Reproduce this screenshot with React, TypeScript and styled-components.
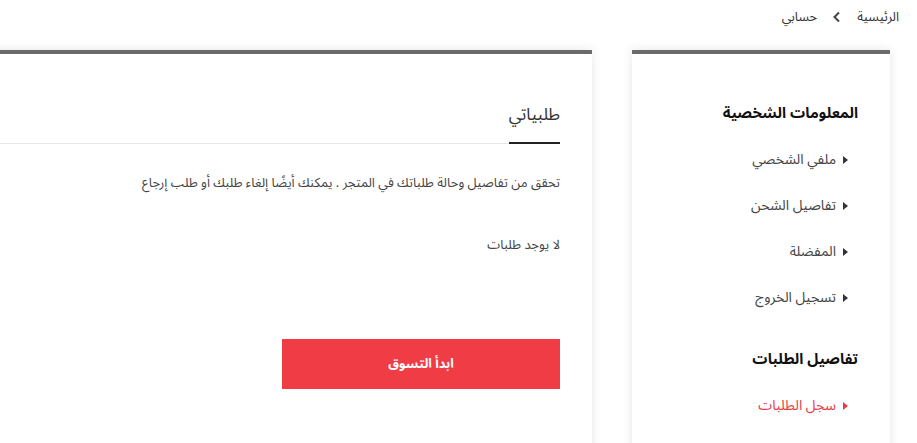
import styled, { createGlobalStyle } from "styled-components";

const GlobalStyle = createGlobalStyle`
  html, body {
    margin: 0;
    padding: 0;
    background: #fff;
    overflow: hidden;
  }
  body {
    font-family: "Noto Sans Arabic", "DejaVu Sans", "Noto Sans", sans-serif;
    direction: rtl;
  }
`;

const Page = styled.div`
  direction: rtl;
  width: 917px;
  height: 443px;
  overflow: hidden;
`;

const Breadcrumb = styled.nav`
  display: flex;
  align-items: center;
  gap: 15px;
  height: 34px;
  padding-right: 18px;
  font-size: 13px;
  color: #333;
`;

const Crumb = styled.span`
  color: #333;
`;

const Layout = styled.div`
  display: flex;
  align-items: flex-start;
  gap: 40px;
  padding-right: 27px;
  margin-top: 16px;
`;

const Card = styled.div`
  background: #fff;
  border-top: 4px solid #6b6b6b;
  box-shadow: 0 0 10px rgba(0, 0, 0, 0.1);
  flex-shrink: 0;
`;

const Sidebar = styled(Card)`
  width: 258px;
  height: 420px;
  padding: 47px 32px 0 0;
  box-sizing: border-box;
`;

const SideTitle = styled.h3`
  margin: 0;
  font-size: 15px;
  font-weight: 700;
  color: #111;
  line-height: 24px;
`;

const SideList = styled.ul`
  list-style: none;
  margin: 0 0 37px;
  padding: 23px 10px 0 0;
  display: flex;
  flex-direction: column;
  gap: 22px;
`;

const SideItem = styled.li<{ $active?: boolean }>`
  display: flex;
  align-items: center;
  gap: 7px;
  font-size: 14px;
  line-height: 24px;
  color: ${(p) => (p.$active ? "#e83c46" : "#444")};
`;

const Caret = styled.span<{ $active?: boolean }>`
  width: 0;
  height: 0;
  border-top: 4px solid transparent;
  border-bottom: 4px solid transparent;
  border-left: 5px solid ${(p) => (p.$active ? "#e83c46" : "#333")};
`;

const Main = styled(Card)`
  width: 700px;
  height: 420px;
  padding: 49px 32px 0 0;
  box-sizing: border-box;
`;

const Tabs = styled.div`
  display: flex;
  border-bottom: 1px solid #e8e8e8;
`;

const Tab = styled.div`
  font-size: 17px;
  color: #333;
  line-height: 24px;
  padding-bottom: 15px;
  border-bottom: 2px solid #222;
  margin-bottom: -1px;
`;

const Body = styled.div`
  padding-left: 40px;
`;

const Lead = styled.p`
  margin: 27px 0 0;
  font-size: 13px;
  line-height: 24px;
  color: #444;
  white-space: nowrap;
`;

const Empty = styled.p`
  margin: 38px 0 0;
  font-size: 13px;
  line-height: 24px;
  color: #444;
`;

const ShopButton = styled.button`
  display: block;
  margin-top: 82px;
  width: 278px;
  height: 50px;
  border: 0;
  background: #f03c45;
  color: #fff;
  font-family: inherit;
  font-size: 13px;
  font-weight: 700;
  cursor: pointer;
`;

const Chevron = () => (
  <svg width="10" height="12" viewBox="0 0 10 12">
    <path d="M7 1.5 L2.5 6 L7 10.5" fill="none" stroke="#444" strokeWidth="2" />
  </svg>
);

const personal = ["ملفي الشخصي", "تفاصيل الشحن", "المفضلة", "تسجيل الخروج"];

export default function App() {
  return (
    <>
      <GlobalStyle />
      <Page>
        <Breadcrumb>
          <Crumb>الرئيسية</Crumb>
          <Chevron />
          <Crumb>حسابي</Crumb>
        </Breadcrumb>
        <Layout>
          <Sidebar>
            <SideTitle>المعلومات الشخصية</SideTitle>
            <SideList>
              {personal.map((t) => (
                <SideItem key={t}>
                  <Caret />
                  {t}
                </SideItem>
              ))}
            </SideList>
            <SideTitle>تفاصيل الطلبات</SideTitle>
            <SideList>
              <SideItem $active>
                <Caret $active />
                سجل الطلبات
              </SideItem>
            </SideList>
          </Sidebar>
          <Main>
            <Tabs>
              <Tab>طلبياتي</Tab>
            </Tabs>
            <Body>
              <Lead>تحقق من تفاصيل وحالة طلباتك في المتجر . يمكنك أيضًا إلغاء طلبك أو طلب إرجاع</Lead>
              <Empty>لا يوجد طلبات</Empty>
              <ShopButton>ابدأ التسوق</ShopButton>
            </Body>
          </Main>
        </Layout>
      </Page>
    </>
  );
}
